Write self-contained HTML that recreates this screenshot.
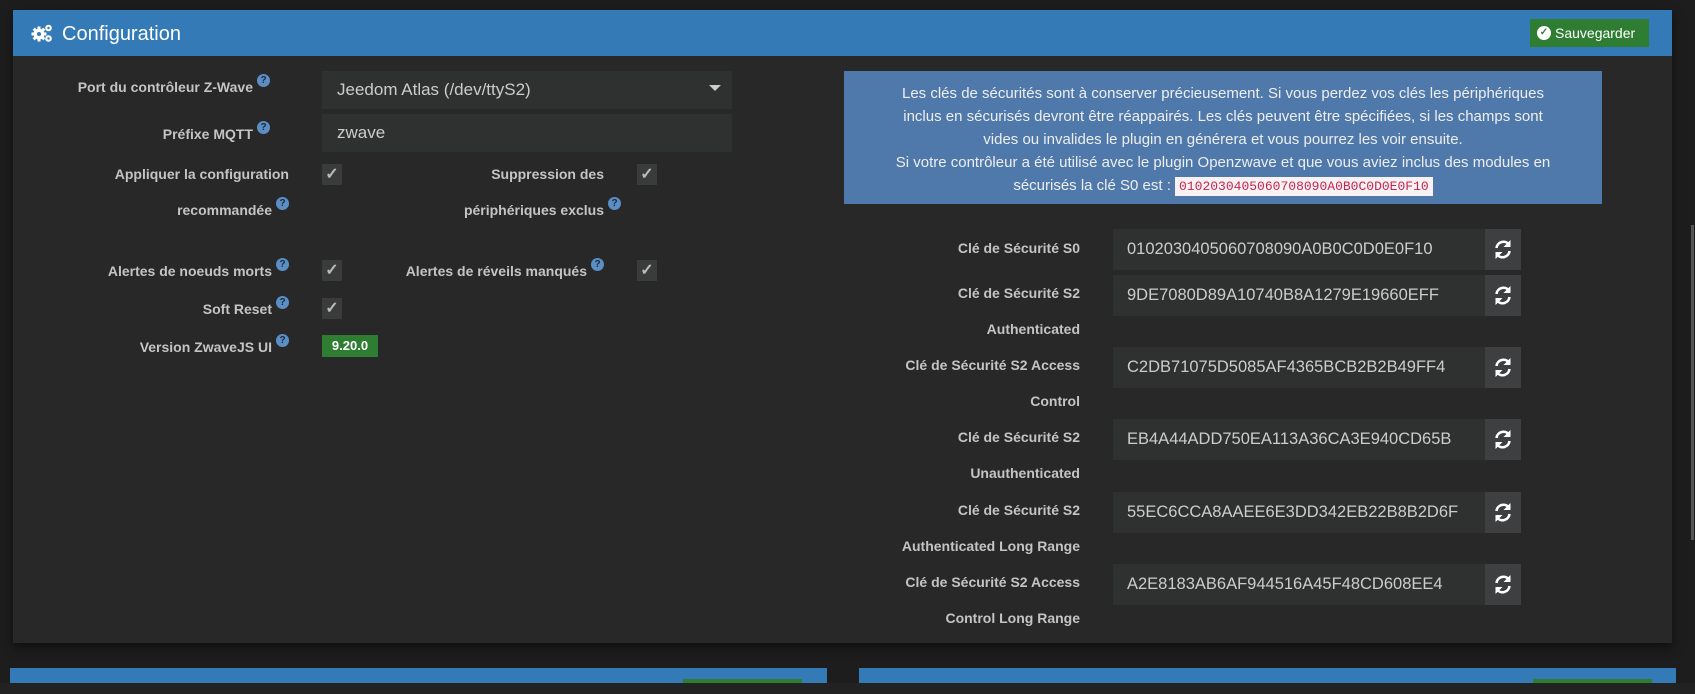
<!DOCTYPE html>
<html><head><meta charset="utf-8"><style>
*{box-sizing:border-box;margin:0;padding:0}
body{width:1695px;height:694px;background:#1d1d1d;font-family:"Liberation Sans",sans-serif;position:relative;overflow:hidden;color:#ccc}
.a{position:absolute}
.panel{left:13px;top:10px;width:1659px;height:633px;background:#272827;box-shadow:0 4px 10px rgba(0,0,0,.5)}
.hdr{left:13px;top:10px;width:1659px;height:46px;background:#337ab7}
.title{left:62px;top:23px;font-size:20px;color:#fff}
.btn{background:#2e7d32;color:#fff;font-size:14px}
.lbl{font-size:14px;font-weight:bold;color:#c4c4c4;text-align:right;line-height:36px}
.q{display:inline-block;width:13px;height:13px;border-radius:50%;background:#5b8ec4;color:#1d2a3a;font-size:10px;line-height:13px;text-align:center;font-weight:bold;vertical-align:9px;margin-left:4px}
.inp{background:#2f3030;color:#ccc;font-size:17px;padding-left:15px}
.cb{width:20px;height:21px;background:#3a3b3b;color:#bbb;font-size:16px;text-align:center;line-height:21px;font-weight:bold}
.key{left:1113px;width:372px;height:41px;background:#2f3030;color:#ccc;font-size:16.5px;line-height:41px;padding-left:14px}
.rf{left:1485px;width:36px;height:41px;background:#3e3f40}
.kl{width:1080px;left:0;font-size:14px;font-weight:bold;color:#c4c4c4;text-align:right;line-height:36px}
</style></head><body>
<div class="a panel"></div>
<div class="a hdr"></div>
<svg class="a" style="left:31px;top:23px" width="22" height="20" viewBox="0 0 22 20"><g fill="#fff"><circle cx="8" cy="11" r="5.5"/><g stroke="#fff" stroke-width="3"><line x1="8" y1="3.5" x2="8" y2="18.5"/><line x1="0.5" y1="11" x2="15.5" y2="11"/><line x1="2.7" y1="5.7" x2="13.3" y2="16.3"/><line x1="2.7" y1="16.3" x2="13.3" y2="5.7"/></g><circle cx="8" cy="11" r="2" fill="#337ab7"/><circle cx="17.5" cy="5" r="3.3"/><circle cx="17.5" cy="5" r="1.2" fill="#337ab7"/><circle cx="17.5" cy="15.5" r="3.3"/><circle cx="17.5" cy="15.5" r="1.2" fill="#337ab7"/></g></svg>
<div class="a title">Configuration</div>
<div class="a btn" style="left:1530px;top:19px;width:119px;height:28px;line-height:28px;padding-left:25px">Sauvegarder</div>
<div class="a" style="left:1537px;top:26px;width:14px;height:14px;border-radius:50%;background:#fff;color:#2e7d32;font-size:10px;line-height:14px;text-align:center;font-weight:bold">✓</div>

<div class="a lbl" style="left:0;width:270px;top:69px">Port du contrôleur Z-Wave<span class="q">?</span></div>
<div class="a inp" style="left:322px;top:71px;width:410px;height:38px;line-height:38px">Jeedom Atlas (/dev/ttyS2)</div>
<div class="a" style="left:709px;top:85px;border-left:6px solid transparent;border-right:6px solid transparent;border-top:6px solid #ccc"></div>
<div class="a lbl" style="left:0;width:270px;top:116px">Préfixe MQTT<span class="q">?</span></div>
<div class="a inp" style="left:322px;top:114px;width:410px;height:38px;line-height:38px">zwave</div>

<div class="a lbl" style="left:0;width:289px;top:156px">Appliquer la configuration<br>recommandée<span class="q">?</span></div>
<div class="a cb" style="left:322px;top:164px">✓</div>
<div class="a lbl" style="left:300px;width:604px;top:156px;left:0">Suppression des<br><span style="margin-right:-17px">périphériques exclus<span class="q">?</span></span></div>
<div class="a cb" style="left:637px;top:164px">✓</div>

<div class="a lbl" style="left:0;width:289px;top:253px">Alertes de noeuds morts<span class="q">?</span></div>
<div class="a cb" style="left:322px;top:260px">✓</div>
<div class="a lbl" style="width:604px;top:253px;left:0">Alertes de réveils manqués<span class="q">?</span></div>
<div class="a cb" style="left:637px;top:260px">✓</div>
<div class="a lbl" style="left:0;width:289px;top:291px">Soft Reset<span class="q">?</span></div>
<div class="a cb" style="left:322px;top:298px">✓</div>
<div class="a lbl" style="left:0;width:289px;top:329px">Version ZwaveJS UI<span class="q">?</span></div>
<div class="a" style="left:322px;top:335px;width:56px;height:22px;background:#2e7d32;color:#fff;font-size:13px;font-weight:bold;text-align:center;line-height:22px">9.20.0</div>

<div class="a" style="left:844px;top:71px;width:758px;height:133px;background:#4f79ab;color:#eee;font-size:15px;text-align:center;line-height:23px;padding-top:11px">Les clés de sécurités sont à conserver précieusement. Si vous perdez vos clés les périphériques<br>inclus en sécurisés devront être réappairés. Les clés peuvent être spécifiées, si les champs sont<br>vides ou invalides le plugin en générera et vous pourrez les voir ensuite.<br>Si votre contrôleur a été utilisé avec le plugin Openzwave et que vous aviez inclus des modules en<br>sécurisés la clé S0 est : <span style="background:#f9f2f4;color:#c7254e;font-family:'Liberation Mono',monospace;font-size:13px;padding:2px 4px">0102030405060708090A0B0C0D0E0F10</span></div>

<div class="a kl" style="top:230px">Clé de Sécurité S0</div>
<div class="a key" style="top:229px">0102030405060708090A0B0C0D0E0F10</div>
<div class="a rf" style="top:229px"></div>
<div class="a kl" style="top:275px">Clé de Sécurité S2<br>Authenticated</div>
<div class="a key" style="top:275px">9DE7080D89A10740B8A1279E19660EFF</div>
<div class="a rf" style="top:275px"></div>
<div class="a kl" style="top:347px">Clé de Sécurité S2 Access<br>Control</div>
<div class="a key" style="top:347px">C2DB71075D5085AF4365BCB2B2B49FF4</div>
<div class="a rf" style="top:347px"></div>
<div class="a kl" style="top:419px">Clé de Sécurité S2<br>Unauthenticated</div>
<div class="a key" style="top:419px">EB4A44ADD750EA113A36CA3E940CD65B</div>
<div class="a rf" style="top:419px"></div>
<div class="a kl" style="top:492px">Clé de Sécurité S2<br>Authenticated Long Range</div>
<div class="a key" style="top:492px">55EC6CCA8AAEE6E3DD342EB22B8B2D6F</div>
<div class="a rf" style="top:492px"></div>
<div class="a kl" style="top:564px">Clé de Sécurité S2 Access<br>Control Long Range</div>
<div class="a key" style="top:564px">A2E8183AB6AF944516A45F48CD608EE4</div>
<div class="a rf" style="top:564px"></div>

<div class="a" style="left:1691px;top:225px;width:3px;height:315px;background:#555"></div>
<div class="a" style="left:0;top:683px;width:1695px;height:11px;background:#222"></div>
<div class="a" style="left:10px;top:668px;width:817px;height:15px;background:#337ab7"></div>
<div class="a" style="left:859px;top:668px;width:817px;height:15px;background:#337ab7"></div>
<div class="a" style="left:683px;top:679px;width:119px;height:4px;background:#2e7d32"></div>
<div class="a" style="left:1533px;top:679px;width:119px;height:4px;background:#2e7d32"></div>
<script>
document.querySelectorAll('.rf').forEach(function(e){e.innerHTML='<svg width="36" height="41" viewBox="0 0 36 41"><g fill="none" stroke="#fff" stroke-width="2.6"><path d="M11.5 19a7 7 0 0 1 12.5-3.5"/><path d="M24.5 22a7 7 0 0 1-12.5 3.5"/></g><path d="M25.5 11v7h-7z" fill="#fff"/><path d="M10.5 30v-7h7z" fill="#fff"/></svg>';});
</script>
</body></html>
